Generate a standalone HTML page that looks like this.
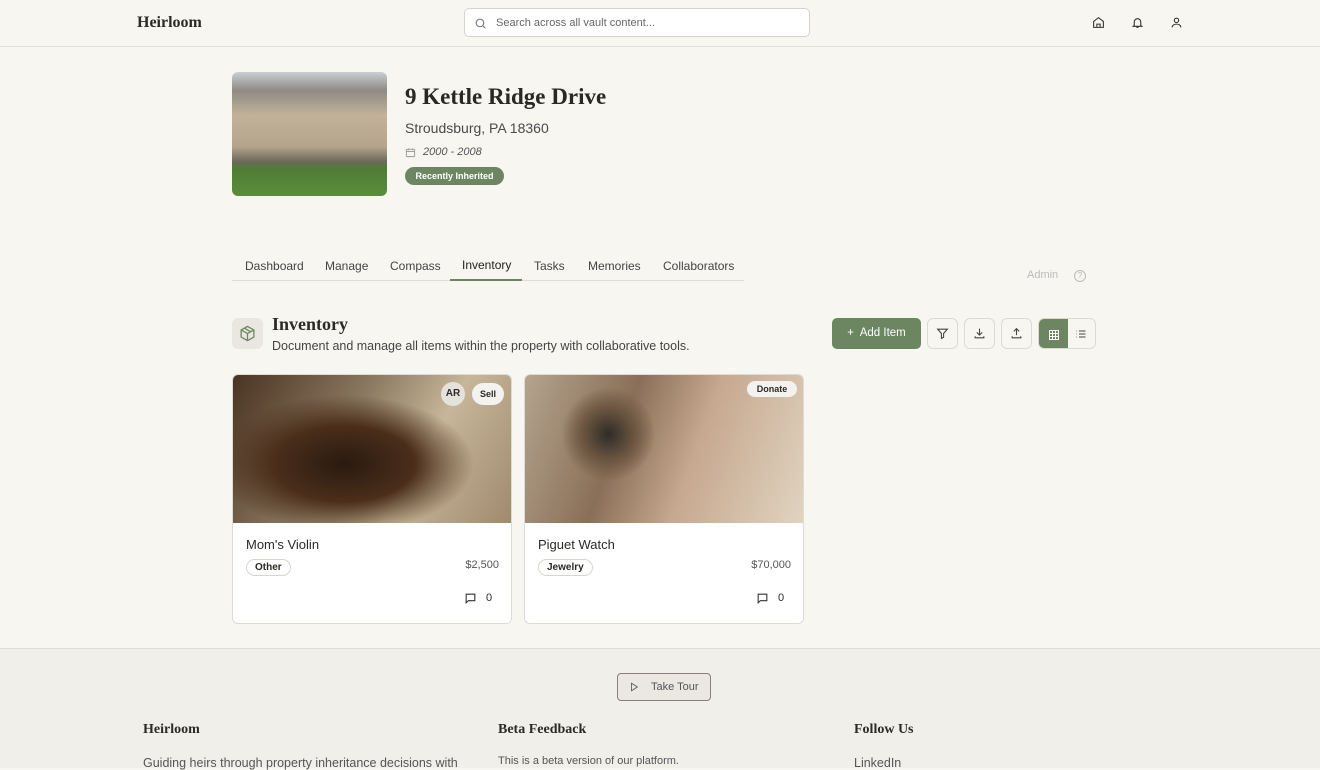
<!DOCTYPE html>
<html><head><meta charset="utf-8"><style>
*{box-sizing:border-box;margin:0;padding:0}
body{width:1320px;height:768px;overflow:hidden;background:#f7f6f1;font-family:"Liberation Sans",sans-serif;color:#2b2a27;position:relative}
.serif{font-family:"Liberation Serif",serif;font-weight:bold}
.abs{position:absolute}
.hdr{position:absolute;left:0;top:0;width:1320px;height:47px;border-bottom:1px solid #e2e0da;background:#f7f6f1}
.btn{position:absolute;top:318px;width:31px;height:31px;border:1px solid #dddad3;border-radius:6px;background:#f7f6f1;display:flex;align-items:center;justify-content:center}
.card{position:absolute;top:374px;width:280px;height:250px;border:1px solid #dedbd4;border-radius:6px;background:#fff;overflow:hidden}
.pill{display:inline-block;border:1px solid #d8d5ce;border-radius:10px;font-size:10px;font-weight:bold;padding:2px 8px;background:#fff}
.tab{position:absolute;top:259px;font-size:12px;color:#444}
</style></head><body>
<div class="hdr">
 <div class="abs serif" style="left:137px;top:14px;font-size:16px">Heirloom</div>
 <div class="abs" style="left:464px;top:8px;width:346px;height:29px;border:1px solid #d6d3cc;border-radius:5px;background:#fff">
  <svg class="abs" style="left:9px;top:8px" width="13" height="13" viewBox="0 0 24 24" fill="none" stroke="#777" stroke-width="2"><circle cx="11" cy="11" r="7"/><path d="M21 21l-5-5"/></svg>
  <div class="abs" style="left:31px;top:8px;font-size:11px;color:#666">Search across all vault content...</div>
 </div>
 <svg class="abs" style="left:1092px;top:16px" width="13" height="13" viewBox="0 0 24 24" fill="none" stroke="#333" stroke-width="2"><path d="M3 10l9-7 9 7v11H3z M9 21v-6h6v6"/></svg>
 <svg class="abs" style="left:1131px;top:16px" width="13" height="13" viewBox="0 0 24 24" fill="none" stroke="#333" stroke-width="2"><path d="M6 17V11a6 6 0 0112 0v6l2 2H4z M10 21h4"/></svg>
 <svg class="abs" style="left:1170px;top:16px" width="13" height="13" viewBox="0 0 24 24" fill="none" stroke="#333" stroke-width="2"><circle cx="12" cy="8" r="4"/><path d="M4 21c0-4 4-6 8-6s8 2 8 6"/></svg>
</div>
<div class="abs" style="left:232px;top:72px;width:155px;height:124px;border-radius:6px;overflow:hidden;background:linear-gradient(180deg,#c9cfd4 0,#8f8a82 15%,#c2b29a 35%,#b5a58c 60%,#6f6a5c 72%,#4e7d35 78%,#5b8d3d 100%)"></div>
<div class="abs serif" style="left:405px;top:84px;font-size:23px;color:#2a2824">9 Kettle Ridge Drive</div>
<div class="abs" style="left:405px;top:120px;font-size:14px;color:#4a4a4a">Stroudsburg, PA 18360</div>
<svg class="abs" style="left:405px;top:147px" width="11" height="11" viewBox="0 0 24 24" fill="none" stroke="#999" stroke-width="2"><rect x="3" y="5" width="18" height="16" rx="2"/><path d="M3 10h18M8 3v4M16 3v4"/></svg>
<div class="abs" style="left:423px;top:146px;font-size:11px;font-style:italic;color:#555">2000 - 2008</div>
<div class="abs" style="left:405px;top:167px;height:18px;width:99px;border-radius:9px;background:#6b8660;color:#fff;font-size:9px;font-weight:bold;text-align:center;line-height:18px">Recently Inherited</div>

<div class="abs" style="left:232px;top:280px;width:512px;height:1px;background:#dedbd4"></div>
<div class="tab" style="left:245px">Dashboard</div>
<div class="tab" style="left:325px">Manage</div>
<div class="tab" style="left:390px">Compass</div>
<div class="tab" style="left:462px;top:258px;color:#222">Inventory</div>
<div class="abs" style="left:450px;top:279px;width:72px;height:2px;background:#6b8660"></div>
<div class="tab" style="left:534px">Tasks</div>
<div class="tab" style="left:588px">Memories</div>
<div class="tab" style="left:663px">Collaborators</div>
<div class="abs" style="left:1027px;top:269px;font-size:11px;color:#bbb">Admin</div>
<div class="abs" style="left:1074px;top:270px;width:12px;height:12px;border:1px solid #bbb;border-radius:50%;font-size:8px;color:#bbb;text-align:center;line-height:10px">?</div>

<div class="abs" style="left:232px;top:318px;width:31px;height:31px;border-radius:6px;background:#e9e7e0;display:flex;align-items:center;justify-content:center">
<svg width="17" height="17" viewBox="0 0 24 24" fill="none" stroke="#6b8660" stroke-width="1.8"><path d="M12 2l9 5v10l-9 5-9-5V7z M3 7l9 5 9-5 M12 12v10 M7.5 4.5l9 5"/></svg></div>
<div class="abs serif" style="left:272px;top:314px;font-size:18px">Inventory</div>
<div class="abs" style="left:272px;top:339px;font-size:12.5px;color:#444">Document and manage all items within the property with collaborative tools.</div>

<div class="abs" style="left:832px;top:318px;width:89px;height:31px;border-radius:5px;background:#6b8660;color:#fff;font-size:11.5px;line-height:31px;text-align:center">+&nbsp; Add Item</div>
<div class="btn" style="left:927px"><svg width="13" height="13" viewBox="0 0 24 24" fill="none" stroke="#444" stroke-width="2"><path d="M3 4h18l-7 8v7l-4 2v-9z"/></svg></div>
<div class="btn" style="left:964px"><svg width="13" height="13" viewBox="0 0 24 24" fill="none" stroke="#444" stroke-width="2"><path d="M12 3v12M7 10l5 5 5-5M4 17v3h16v-3"/></svg></div>
<div class="btn" style="left:1001px"><svg width="13" height="13" viewBox="0 0 24 24" fill="none" stroke="#444" stroke-width="2"><path d="M12 15V3M7 8l5-5 5 5M4 17v3h16v-3"/></svg></div>
<div class="abs" style="left:1038px;top:318px;width:58px;height:31px;border:1px solid #dddad3;border-radius:6px;overflow:hidden">
 <div class="abs" style="left:0;top:0;width:29px;height:31px;background:#6b8660;display:flex;align-items:center;justify-content:center"><svg width="12" height="12" viewBox="0 0 24 24" fill="none" stroke="#fff" stroke-width="2"><rect x="3" y="3" width="18" height="18"/><path d="M9 3v18M15 3v18M3 9h18M3 15h18"/></svg></div>
 <svg class="abs" style="left:36px;top:9px" width="12" height="12" viewBox="0 0 24 24" fill="none" stroke="#444" stroke-width="2"><path d="M8 6h13M8 12h13M8 18h13M3 6h1M3 12h1M3 18h1"/></svg>
</div>

<div class="card" style="left:232px">
 <div style="height:148px;background:radial-gradient(ellipse at 40% 60%,#2a1a10 0,#4a2e1a 30%,transparent 55%),linear-gradient(120deg,#4a3322 0,#8d7a62 40%,#c7b69a 65%,#a08a6e 100%)"></div>
 <div class="abs" style="left:208px;top:7px;width:24px;height:24px;border-radius:50%;background:#e5e2dc;font-size:10px;font-weight:bold;text-align:center;line-height:24px">AR</div>
 <div class="abs" style="left:239px;top:8px;width:32px;height:22px;border-radius:11px;background:#f4f2ee;font-size:9px;font-weight:bold;text-align:center;line-height:22px">Sell</div>
 <div class="abs" style="left:13px;top:162px;font-size:13px">Mom's Violin</div>
 <div class="abs" style="left:13px;top:182px"><span class="pill">Other</span></div>
 <div class="abs" style="right:12px;top:184px;font-size:11px;color:#555">$2,500</div>
 <svg class="abs" style="left:231px;top:217px" width="13" height="13" viewBox="0 0 24 24" fill="none" stroke="#333" stroke-width="2"><path d="M4 4h16v12H8l-4 4z"/></svg>
 <div class="abs" style="left:253px;top:217px;font-size:11px">0</div>
</div>
<div class="card" style="left:524px">
 <div style="height:148px;background:radial-gradient(circle at 30% 40%,#2e2c28 0,#6b5540 12%,transparent 22%),linear-gradient(110deg,#b4a48e 0,#8a6f58 35%,#c7a890 60%,#e0d4c0 100%)"></div>
 <div class="abs" style="left:222px;top:6px;width:50px;height:16px;border-radius:8px;background:#f4f2ee;font-size:9px;font-weight:bold;text-align:center;line-height:16px">Donate</div>
 <div class="abs" style="left:13px;top:162px;font-size:13px">Piguet Watch</div>
 <div class="abs" style="left:13px;top:182px"><span class="pill">Jewelry</span></div>
 <div class="abs" style="right:12px;top:184px;font-size:11px;color:#555">$70,000</div>
 <svg class="abs" style="left:231px;top:217px" width="13" height="13" viewBox="0 0 24 24" fill="none" stroke="#333" stroke-width="2"><path d="M4 4h16v12H8l-4 4z"/></svg>
 <div class="abs" style="left:253px;top:217px;font-size:11px">0</div>
</div>

<div class="abs" style="left:0;top:648px;width:1320px;height:120px;background:#f1efea;border-top:1px solid #dedbd4"></div>
<div class="abs" style="left:617px;top:673px;width:94px;height:28px;border:1px solid #8a7e7a;border-radius:4px;background:#ebe8e2;font-size:11px;color:#555;line-height:26px;padding-left:33px">Take Tour
<svg class="abs" style="left:11px;top:8px" width="10" height="10" viewBox="0 0 24 24" fill="none" stroke="#555" stroke-width="2"><path d="M6 3l14 9-14 9z"/></svg></div>
<div class="abs serif" style="left:143px;top:722px;font-size:14px">Heirloom</div>
<div class="abs" style="left:143px;top:756px;font-size:12.5px;color:#555">Guiding heirs through property inheritance decisions with</div>
<div class="abs serif" style="left:498px;top:722px;font-size:14px">Beta Feedback</div>
<div class="abs" style="left:498px;top:755px;font-size:11px;color:#555">This is a beta version of our platform.</div>
<div class="abs serif" style="left:854px;top:722px;font-size:14px">Follow Us</div>
<div class="abs" style="left:854px;top:756px;font-size:12.5px;color:#555">LinkedIn</div>
</body></html>
